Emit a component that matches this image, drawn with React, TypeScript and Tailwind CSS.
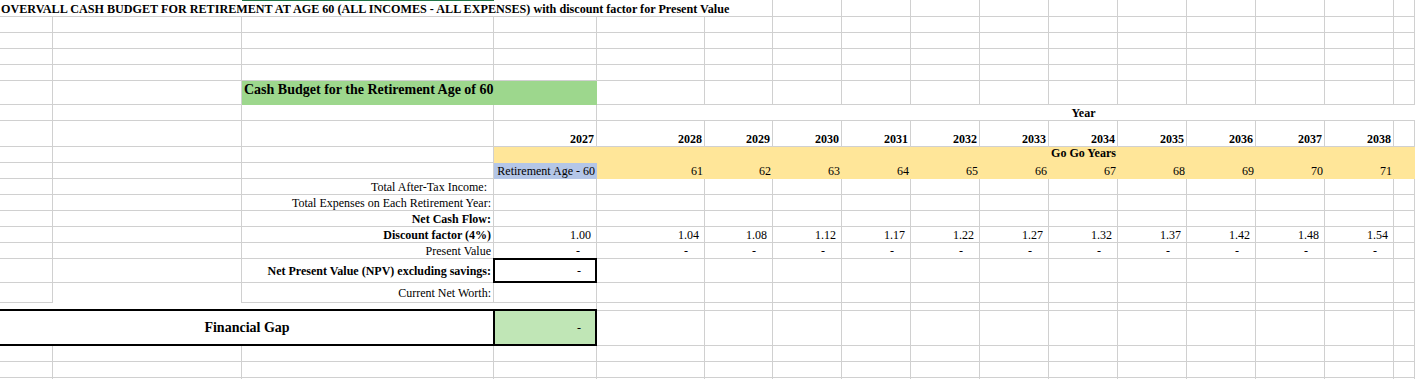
import React from 'react';

const W = [
  'w-[53px]',
  'w-[189px]',
  'w-[252px]',
  'w-[103px]',
  'w-[108px]',
  'w-[68px]',
  'w-[69px]',
  'w-[69px]',
  'w-[69px]',
  'w-[69px]',
  'w-[69px]',
  'w-[69px]',
  'w-[69px]',
  'w-[69px]',
  'w-[69px]',
  'flex-1 min-w-0',
];

type CellProps = {
  c: number;
  r?: boolean;
  b?: boolean;
  al?: string;
  cls?: string;
  children?: React.ReactNode;
};

function Cell({ c, r = true, b = true, al = 'items-end justify-end', cls = '', children }: CellProps) {
  return (
    <div
      className={[
        'flex shrink-0 whitespace-nowrap border-[#d0d0d0]',
        W[c],
        r ? 'border-r' : '',
        b ? 'border-b' : '',
        al,
        cls,
      ].join(' ')}
    >
      {children}
    </div>
  );
}

function Row({ h, children }: { h: string; children?: React.ReactNode }) {
  return <div className={'flex w-full ' + h}>{children}</div>;
}

function blanks(from: number, to: number) {
  const out: React.ReactNode[] = [];
  for (let i = from; i <= to; i++) out.push(<Cell key={i} c={i} />);
  return out;
}

const years = [2027, 2028, 2029, 2030, 2031, 2032, 2033, 2034, 2035, 2036, 2037, 2038];
const ages = [61, 62, 63, 64, 65, 66, 67, 68, 69, 70, 71];
const factors = ['1.00', '1.04', '1.08', '1.12', '1.17', '1.22', '1.27', '1.32', '1.37', '1.42', '1.48', '1.54'];

function LabelRow({ label, bold, pr, children }: { label: string; bold?: boolean; pr: string; children?: React.ReactNode }) {
  return (
    <Row h="h-[16px]">
      <Cell c={0} />
      <Cell c={1} />
      <Cell c={2} al={'items-end justify-end ' + pr}>
        <span className={bold ? 'font-bold' : ''}>{label}</span>
      </Cell>
      {children}
    </Row>
  );
}

export default function App() {
  return (
    <div className="h-screen w-full overflow-hidden bg-white text-black font-['Liberation_Serif',serif] text-[12px] leading-[14px]">
      {/* Row 0: title */}
      <Row h="h-[17px]">
        <Cell c={0} r={false} al="items-end justify-start pl-px">
          <span className="font-bold text-[12.15px]">
            OVERVALL CASH BUDGET FOR RETIREMENT AT AGE 60 (ALL INCOMES - ALL EXPENSES) with discount factor for Present Value
          </span>
        </Cell>
        <Cell c={1} r={false} />
        <Cell c={2} r={false} cls="border-t border-t-[#217346]" />
        <Cell c={3} r={false} />
        <Cell c={4} r={false} />
        {blanks(5, 15)}
      </Row>

      {/* Rows 1-4 */}
      <Row h="h-[16px]">{blanks(0, 15)}</Row>
      <Row h="h-[16px]">{blanks(0, 15)}</Row>
      <Row h="h-[16px]">{blanks(0, 15)}</Row>
      <Row h="h-[16px]">{blanks(0, 15)}</Row>

      {/* Row 5: green header */}
      <Row h="h-[24px]">
        <Cell c={0} />
        <Cell c={1} />
        <div className="flex w-[355px] shrink-0 items-start justify-start whitespace-nowrap bg-[#9dd78d] pl-[2px] pt-px">
          <span className="text-[14px] leading-[16px] font-bold">Cash Budget for the Retirement Age of 60</span>
        </div>
        {blanks(4, 15)}
      </Row>

      {/* Row 6: Year */}
      <Row h="h-[16px]">
        <Cell c={0} />
        <Cell c={1} />
        <Cell c={2} />
        <Cell c={3} />
        {[4, 5, 6, 7, 8, 9].map((i) => (
          <Cell key={i} c={i} r={false} />
        ))}
        <Cell c={10} r={false} al="items-end justify-center">
          <span className="font-bold">Year</span>
        </Cell>
        {[11, 12, 13, 14, 15].map((i) => (
          <Cell key={i} c={i} r={false} />
        ))}
      </Row>

      {/* Row 7: years */}
      <Row h="h-[26px]">
        <Cell c={0} />
        <Cell c={1} />
        <Cell c={2} />
        {years.map((y, i) => (
          <Cell key={y} c={3 + i} al="items-end justify-end pr-[2px]">
            <span className="font-bold">{y}</span>
          </Cell>
        ))}
        <Cell c={15} />
      </Row>

      {/* Row 8: Go Go Years */}
      <Row h="h-[16px]">
        <Cell c={0} />
        <Cell c={1} />
        <Cell c={2} />
        {[3, 4, 5, 6, 7, 8, 9].map((i) => (
          <Cell key={i} c={i} r={false} b={false} cls="bg-[#ffe699]" />
        ))}
        <Cell c={10} r={false} b={false} al="items-end justify-center pb-[3px]" cls="bg-[#ffe699]">
          <span className="font-bold">Go Go Years</span>
        </Cell>
        {[11, 12, 13, 14, 15].map((i) => (
          <Cell key={i} c={i} r={false} b={false} cls="bg-[#ffe699]" />
        ))}
      </Row>

      {/* Row 9: ages */}
      <Row h="h-[16px]">
        <Cell c={0} />
        <Cell c={1} />
        <Cell c={2} />
        <Cell c={3} r={false} b={false} al="items-end justify-end pr-[2px] pb-px" cls="bg-[#b4c6e7]">
          Retirement Age - 60
        </Cell>
        {ages.map((a, i) => (
          <Cell key={a} c={4 + i} r={false} b={false} al="items-end justify-end pr-[2px] pb-px" cls="bg-[#ffe699]">
            {a}
          </Cell>
        ))}
        <Cell c={15} r={false} b={false} cls="bg-[#ffe699]" />
      </Row>

      <LabelRow label="Total After-Tax Income:" pr="pr-[6px]">
        {blanks(3, 15)}
      </LabelRow>
      <LabelRow label="Total Expenses on Each Retirement Year:" pr="pr-[2px]">
        {blanks(3, 15)}
      </LabelRow>
      <LabelRow label="Net Cash Flow:" bold pr="pr-[2px]">
        {blanks(3, 15)}
      </LabelRow>
      <LabelRow label="Discount factor (4%)" bold pr="pr-[2px]">
        {factors.map((f, i) => (
          <Cell key={i} c={3 + i} al="items-end justify-end pr-[5px]">
            {f}
          </Cell>
        ))}
        <Cell c={15} />
      </LabelRow>
      <LabelRow label="Present Value" pr="pr-[2px]">
        {factors.map((_, i) => (
          <Cell key={i} c={3 + i} al="items-end justify-end pr-[16px]">
            -
          </Cell>
        ))}
        <Cell c={15} />
      </LabelRow>

      {/* Row 15: NPV */}
      <Row h="h-[24px]">
        <Cell c={0} />
        <Cell c={1} />
        <Cell c={2} al="items-center justify-end pr-[2px] pt-px">
          <span className="font-bold">Net Present Value (NPV) excluding savings:</span>
        </Cell>
        <div className="-ml-px -mt-px flex h-[25px] w-[104px] shrink-0 items-center justify-end border-2 border-black pr-[14px]">
          -
        </div>
        {blanks(4, 15)}
      </Row>

      {/* Row 16: Current Net Worth */}
      <Row h="h-[20px]">
        <Cell c={0} />
        <Cell c={1} b={false} />
        <Cell c={2} al="items-center justify-end pr-[2px]">
          Current Net Worth:
        </Cell>
        {blanks(3, 15)}
      </Row>

      {/* Row 17: spacer */}
      <Row h="h-[8px]">
        <Cell c={0} r={false} b={false} />
        <Cell c={1} r={false} b={false} />
        <Cell c={2} r={false} b={false} />
        <Cell c={3} b={false} />
        {blanks(4, 15)}
      </Row>

      {/* Row 18: Financial Gap */}
      <Row h="h-[35px]">
        <div className="-mt-[2px] flex h-[37px] w-[494px] shrink-0 items-center justify-center border-y-2 border-black">
          <span className="text-[14px] leading-[16px] font-bold">Financial Gap</span>
        </div>
        <div className="-ml-px -mt-[2px] flex h-[37px] w-[104px] shrink-0 items-center justify-end border-2 border-black bg-[#c0e6b6] pr-[14px]">
          -
        </div>
        {blanks(4, 15)}
      </Row>

      <Row h="h-[16px]">{blanks(0, 15)}</Row>
      <Row h="h-[16px]">{blanks(0, 15)}</Row>
      <Row h="h-[16px]">{blanks(0, 15)}</Row>
    </div>
  );
}
